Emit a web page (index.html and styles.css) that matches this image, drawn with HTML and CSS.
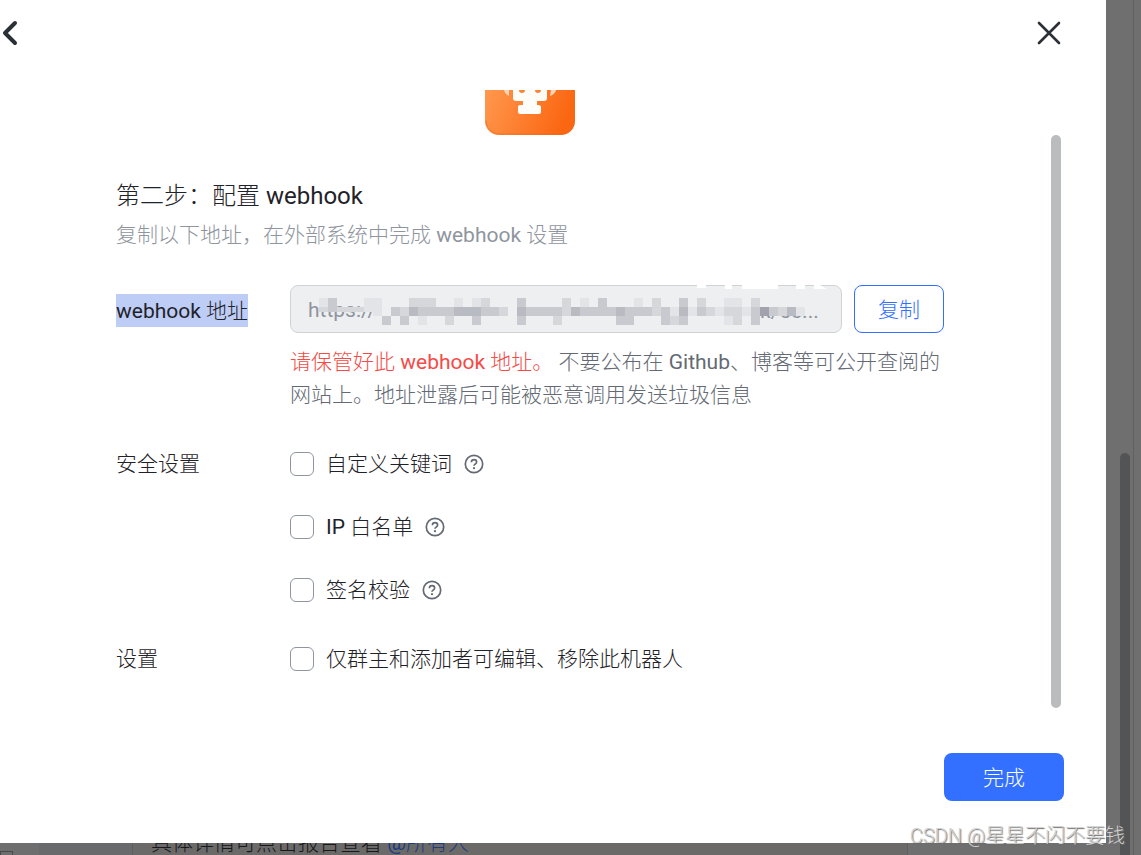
FILE: index.html
```html
<!DOCTYPE html>
<html lang="zh-CN">
<head>
  <meta charset="UTF-8">
  <meta name="viewport" content="width=device-width, initial-scale=1.0">
  <title>配置 webhook</title>
  <link rel="stylesheet" href="styles.css">
</head>
<body>

<main class="chat">
  <div class="chat-nav"><span class="nav-icon"></span></div>
  <div class="chat-list"></div>
  <div class="chat-messages">
    <p class="message">具体详情可点击报告查看 <a href="#">@所有人</a></p>
  </div>
  <div class="chat-side"><span class="side-thumb"></span></div>
</main>

<section class="modal" role="dialog" aria-labelledby="title">
  <header class="modal-header">
    <button type="button" class="icon-button" aria-label="返回">
      <svg width="20" height="28" viewBox="0 0 20 28"><path d="M15 4L5 14L15 24" fill="none" stroke="#2b2f36" stroke-width="4" stroke-linecap="round" stroke-linejoin="round"/></svg>
    </button>
    <button type="button" class="icon-button" aria-label="关闭">
      <svg width="26" height="26" viewBox="0 0 26 26"><path d="M3 3L23 23M23 3L3 23" stroke="#2b2f36" stroke-width="2.6" stroke-linecap="round"/></svg>
    </button>
  </header>

  <div class="modal-body">
    <svg class="avatar" width="90" height="45" viewBox="0 0 90 45">
      <defs>
        <linearGradient id="orange" x1="0" y1="0" x2="1" y2="0.2">
          <stop offset="0" stop-color="#ff984e"/>
          <stop offset="1" stop-color="#fb6611"/>
        </linearGradient>
      </defs>
      <path d="M0 0H90V31A14 14 0 0 1 76 45H14A14 14 0 0 1 0 31Z" fill="url(#orange)"/>
      <path d="M1 31A13 13 0 0 0 14 44H76A13 13 0 0 0 89 31" fill="none" stroke="#e8661c" stroke-opacity="0.5"/>
      <path d="M19 0H24V6Q20 4 19 0ZM66 0H71Q70 4 65 6Z" fill="#ffd5b5"/>
      <path d="M28 0H62V8Q62 11 59 11H52V15H53Q56 15 56 17V22Q56 24 54 24H35Q33 24 33 22V17Q33 15 35 15H38V11H31Q28 11 28 8Z" fill="#fffdf9"/>
      <path d="M34 0H40Q40 3 37 3T34 0ZM50 0H56Q56 3 53 3T50 0Z" fill="#fd8335"/>
    </svg>

    <h1 class="title" id="title">第二步：配置 webhook</h1>
    <p class="subtitle">复制以下地址，在外部系统中完成 webhook 设置</p>

    <form id="webhookForm" class="form">
      <div class="form-row">
        <label for="url" class="row-label url-label"><span class="selected">webhook 地址</span></label>
        <div>
          <div class="url-line">
            <div class="url-box">
              <input type="text" id="url" name="url" value="https://" readonly>
              <svg class="mosaic" id="mosaic" width="550" height="48" viewBox="0 0 550 48">
                <text x="470" y="33" class="mosaic-text">k/5c...</text>
                <path d="M29 10H96V21H29ZM82 30H97V38H80ZM466 10H528V25L505 29H466Z" class="shade-0"/>
                <path d="M407 0H416V3H407ZM435 0H442V4H435ZM452 0H488V4H452ZM506 0H515V4H506ZM524 0H530L537 4H524Z" fill="#fff"/>
              </svg>
            </div>
            <button type="button" class="copy-button">复制</button>
          </div>
          <p class="hint"><span class="warning">请保管好此 webhook 地址。</span> 不要公布在 Github、博客等可公开查阅的网站上。地址泄露后可能被恶意调用发送垃圾信息</p>
        </div>
      </div>

      <div class="form-row">
        <span class="row-label">安全设置</span>
        <div class="options">
          <div class="option">
            <input type="checkbox" id="keyword" name="keyword">
            <label for="keyword">自定义关键词</label>
            <svg class="help" width="20" height="20" viewBox="0 0 20 20"><circle cx="10" cy="10" r="8.7"/><path d="M7.4 8.2Q7.4 5.6 10 5.6T12.6 8Q12.6 9.2 11.3 9.9Q10 10.6 10 11.8"/><circle class="dot" cx="10" cy="14.2" r="1.1"/></svg>
          </div>
          <div class="option">
            <input type="checkbox" id="whitelist" name="whitelist">
            <label for="whitelist">IP 白名单</label>
            <svg class="help" width="20" height="20" viewBox="0 0 20 20"><circle cx="10" cy="10" r="8.7"/><path d="M7.4 8.2Q7.4 5.6 10 5.6T12.6 8Q12.6 9.2 11.3 9.9Q10 10.6 10 11.8"/><circle class="dot" cx="10" cy="14.2" r="1.1"/></svg>
          </div>
          <div class="option">
            <input type="checkbox" id="sign" name="sign">
            <label for="sign">签名校验</label>
            <svg class="help" width="20" height="20" viewBox="0 0 20 20"><circle cx="10" cy="10" r="8.7"/><path d="M7.4 8.2Q7.4 5.6 10 5.6T12.6 8Q12.6 9.2 11.3 9.9Q10 10.6 10 11.8"/><circle class="dot" cx="10" cy="14.2" r="1.1"/></svg>
          </div>
        </div>
      </div>

      <div class="form-row">
        <span class="row-label">设置</span>
        <div class="option">
          <input type="checkbox" id="adminOnly" name="adminOnly">
          <label for="adminOnly">仅群主和添加者可编辑、移除此机器人</label>
        </div>
      </div>
    </form>
  </div>

  <footer class="modal-footer">
    <button type="submit" form="webhookForm" class="done-button">完成</button>
  </footer>
  <span class="modal-thumb"></span>
</section>

<div class="watermark">CSDN @星星不闪不要钱</div>

<script src="mosaic.js"></script>
</body>
</html>
```
FILE: styles.css
```css
* {
  box-sizing: border-box;
}

body {
  margin: 0;
  font-family: Roboto, "Noto Sans CJK SC Light", "Noto Sans CJK SC", sans-serif;
  font-size: 21px;
  line-height: 33px;
  color: #1f2329;
  background-color: #6f6f6f;
}

h1, p {
  margin: 0;
}

button, input {
  font: inherit;
}

.chat {
  display: flex;
  height: 100vh;
  overflow: hidden;
}

.chat-nav, .chat-list, .chat-messages {
  display: flex;
  align-items: flex-end;
}

.chat-nav {
  width: 39px;
  background-color: #6f6e6e;
}

.nav-icon {
  width: 13px;
  height: 4px;
  border: 1px solid #4a4a4a;
  border-bottom: none;
}

.chat-list {
  width: 94px;
  background-color: #686a6c;
  border-right: 1px solid #5c5f64;
}

.chat-messages {
  width: 775px;
  padding: 0 18px;
  background-color: #6b6a69;
  border-right: 1px solid #5f5f5f;
}

.message {
  height: 28px;
  color: #16181b;
}

.message a {
  color: #1c3b80;
  text-decoration: none;
}

.chat-side {
  display: flex;
  flex: 1;
  align-items: flex-end;
  justify-content: flex-end;
  margin-right: 7px;
  padding-right: 3px;
  border-right: 1px solid #606060;
}

.side-thumb {
  width: 10px;
  height: 47vh;
  border-radius: 5px 5px 0 0;
  background-color: #535456;
}

.modal {
  position: absolute;
  inset: 0 35px 12px 0;
  display: flex;
  flex-direction: column;
  background-color: #fff;
}

.modal-header {
  display: flex;
  justify-content: space-between;
  align-items: center;
  height: 66px;
  margin-bottom: 24px;
  padding-right: 44px;
}

.icon-button {
  display: flex;
  padding: 0;
  border: none;
  background: none;
  cursor: pointer;
}

.modal-body {
  flex: 1;
  padding: 0 162px 0 116px;
}

.avatar {
  display: block;
  margin: 0 auto 43px;
}

.title {
  font-size: 24px;
  font-weight: 400;
  line-height: 36px;
}

.subtitle {
  margin: 5px 0 33px;
  color: #8f959e;
}

.form {
  display: flex;
  flex-direction: column;
  gap: 34px;
}

.form-row {
  display: grid;
  grid-template-columns: 174px 1fr;
}

.row-label, .option label {
  padding-top: 2px;
}

.url-label {
  padding-top: 9px;
}

.selected {
  display: inline-block;
  padding-top: 2px;
  line-height: 31px;
  background-color: #bdcdf6;
}

.url-line {
  display: flex;
  gap: 12px;
  margin-bottom: 13px;
}

.url-box {
  position: relative;
  flex: 1;
}

.url-box input {
  display: block;
  width: 100%;
  height: 48px;
  padding: 2px 17px 0;
  border: 1px solid #d0d3d6;
  border-radius: 8px;
  background-color: #eeeff1;
  color: #8f959e;
}

.mosaic {
  position: absolute;
  top: 0;
  left: 0;
}

.mosaic-text {
  fill: #8f959e;
}

.shade-0 { fill: #eeeff1; }
.shade-1 { fill: #e3e4e7; }
.shade-2 { fill: #d5d7da; }
.shade-3 { fill: #c8cacf; }
.shade-4 { fill: #b9bbc2; }
.shade-5 { fill: #a0a3ac; }

.copy-button {
  width: 90px;
  height: 48px;
  padding: 2px 0 0;
  border: 1px solid #3370ff;
  border-radius: 8px;
  background-color: #fff;
  color: #3370ff;
  cursor: pointer;
}

.hint {
  color: #646a73;
}

.warning {
  color: #f54a45;
}

.options {
  display: flex;
  flex-direction: column;
  gap: 28px;
}

.option {
  display: flex;
  align-items: center;
  gap: 12px;
}

.option input {
  appearance: none;
  width: 24px;
  height: 24px;
  margin: 0;
  border: 1px solid #8f959e;
  border-radius: 6px;
  background-color: #fff;
}

.option input:checked {
  background-color: #3370ff;
}

.help {
  fill: none;
  stroke: #646a73;
  stroke-width: 1.7;
}

.help .dot {
  fill: #646a73;
  stroke: none;
}

.modal-footer {
  display: flex;
  justify-content: flex-end;
  padding: 0 42px 42px;
}

.done-button {
  width: 120px;
  height: 48px;
  padding: 2px 0 0;
  border: none;
  border-radius: 8px;
  background-color: #3370ff;
  color: #fff;
  cursor: pointer;
}

.modal-thumb {
  position: absolute;
  top: 135px;
  right: 45px;
  bottom: 135px;
  width: 10px;
  border-radius: 5px;
  background-color: #bbbcbe;
}

.watermark {
  position: absolute;
  right: 16px;
  bottom: 2px;
  font-size: 20px;
  font-weight: 300;
  color: #d2d2d2;
  text-shadow: 1px 1px 1px #6b6b6b;
}
```
FILE: mosaic.js
```js
// One digit per 9px cell, higher is darker
const rows = [
  '000130001100022200101200030000201030001020030200110200000',
  '000232221103243333444332043333243333433323141321221353241',
  '000000000030301002003000030002000000330003230000120300000'
];
const mosaic = document.getElementById('mosaic');

rows.forEach((row, y) => {
  [...row].forEach((shade, x) => {
    if (shade === '0') return;
    const cell = document.createElementNS('http://www.w3.org/2000/svg', 'rect');
    cell.setAttribute('x', 2 + x * 9);
    cell.setAttribute('y', 13 + y * 9);
    cell.setAttribute('width', 9);
    // the start of the address stays partly readable
    cell.setAttribute('height', y === 1 && x < 9 ? 5 : 9);
    cell.setAttribute('class', 'shade-' + shade);
    mosaic.appendChild(cell);
  });
});
```
